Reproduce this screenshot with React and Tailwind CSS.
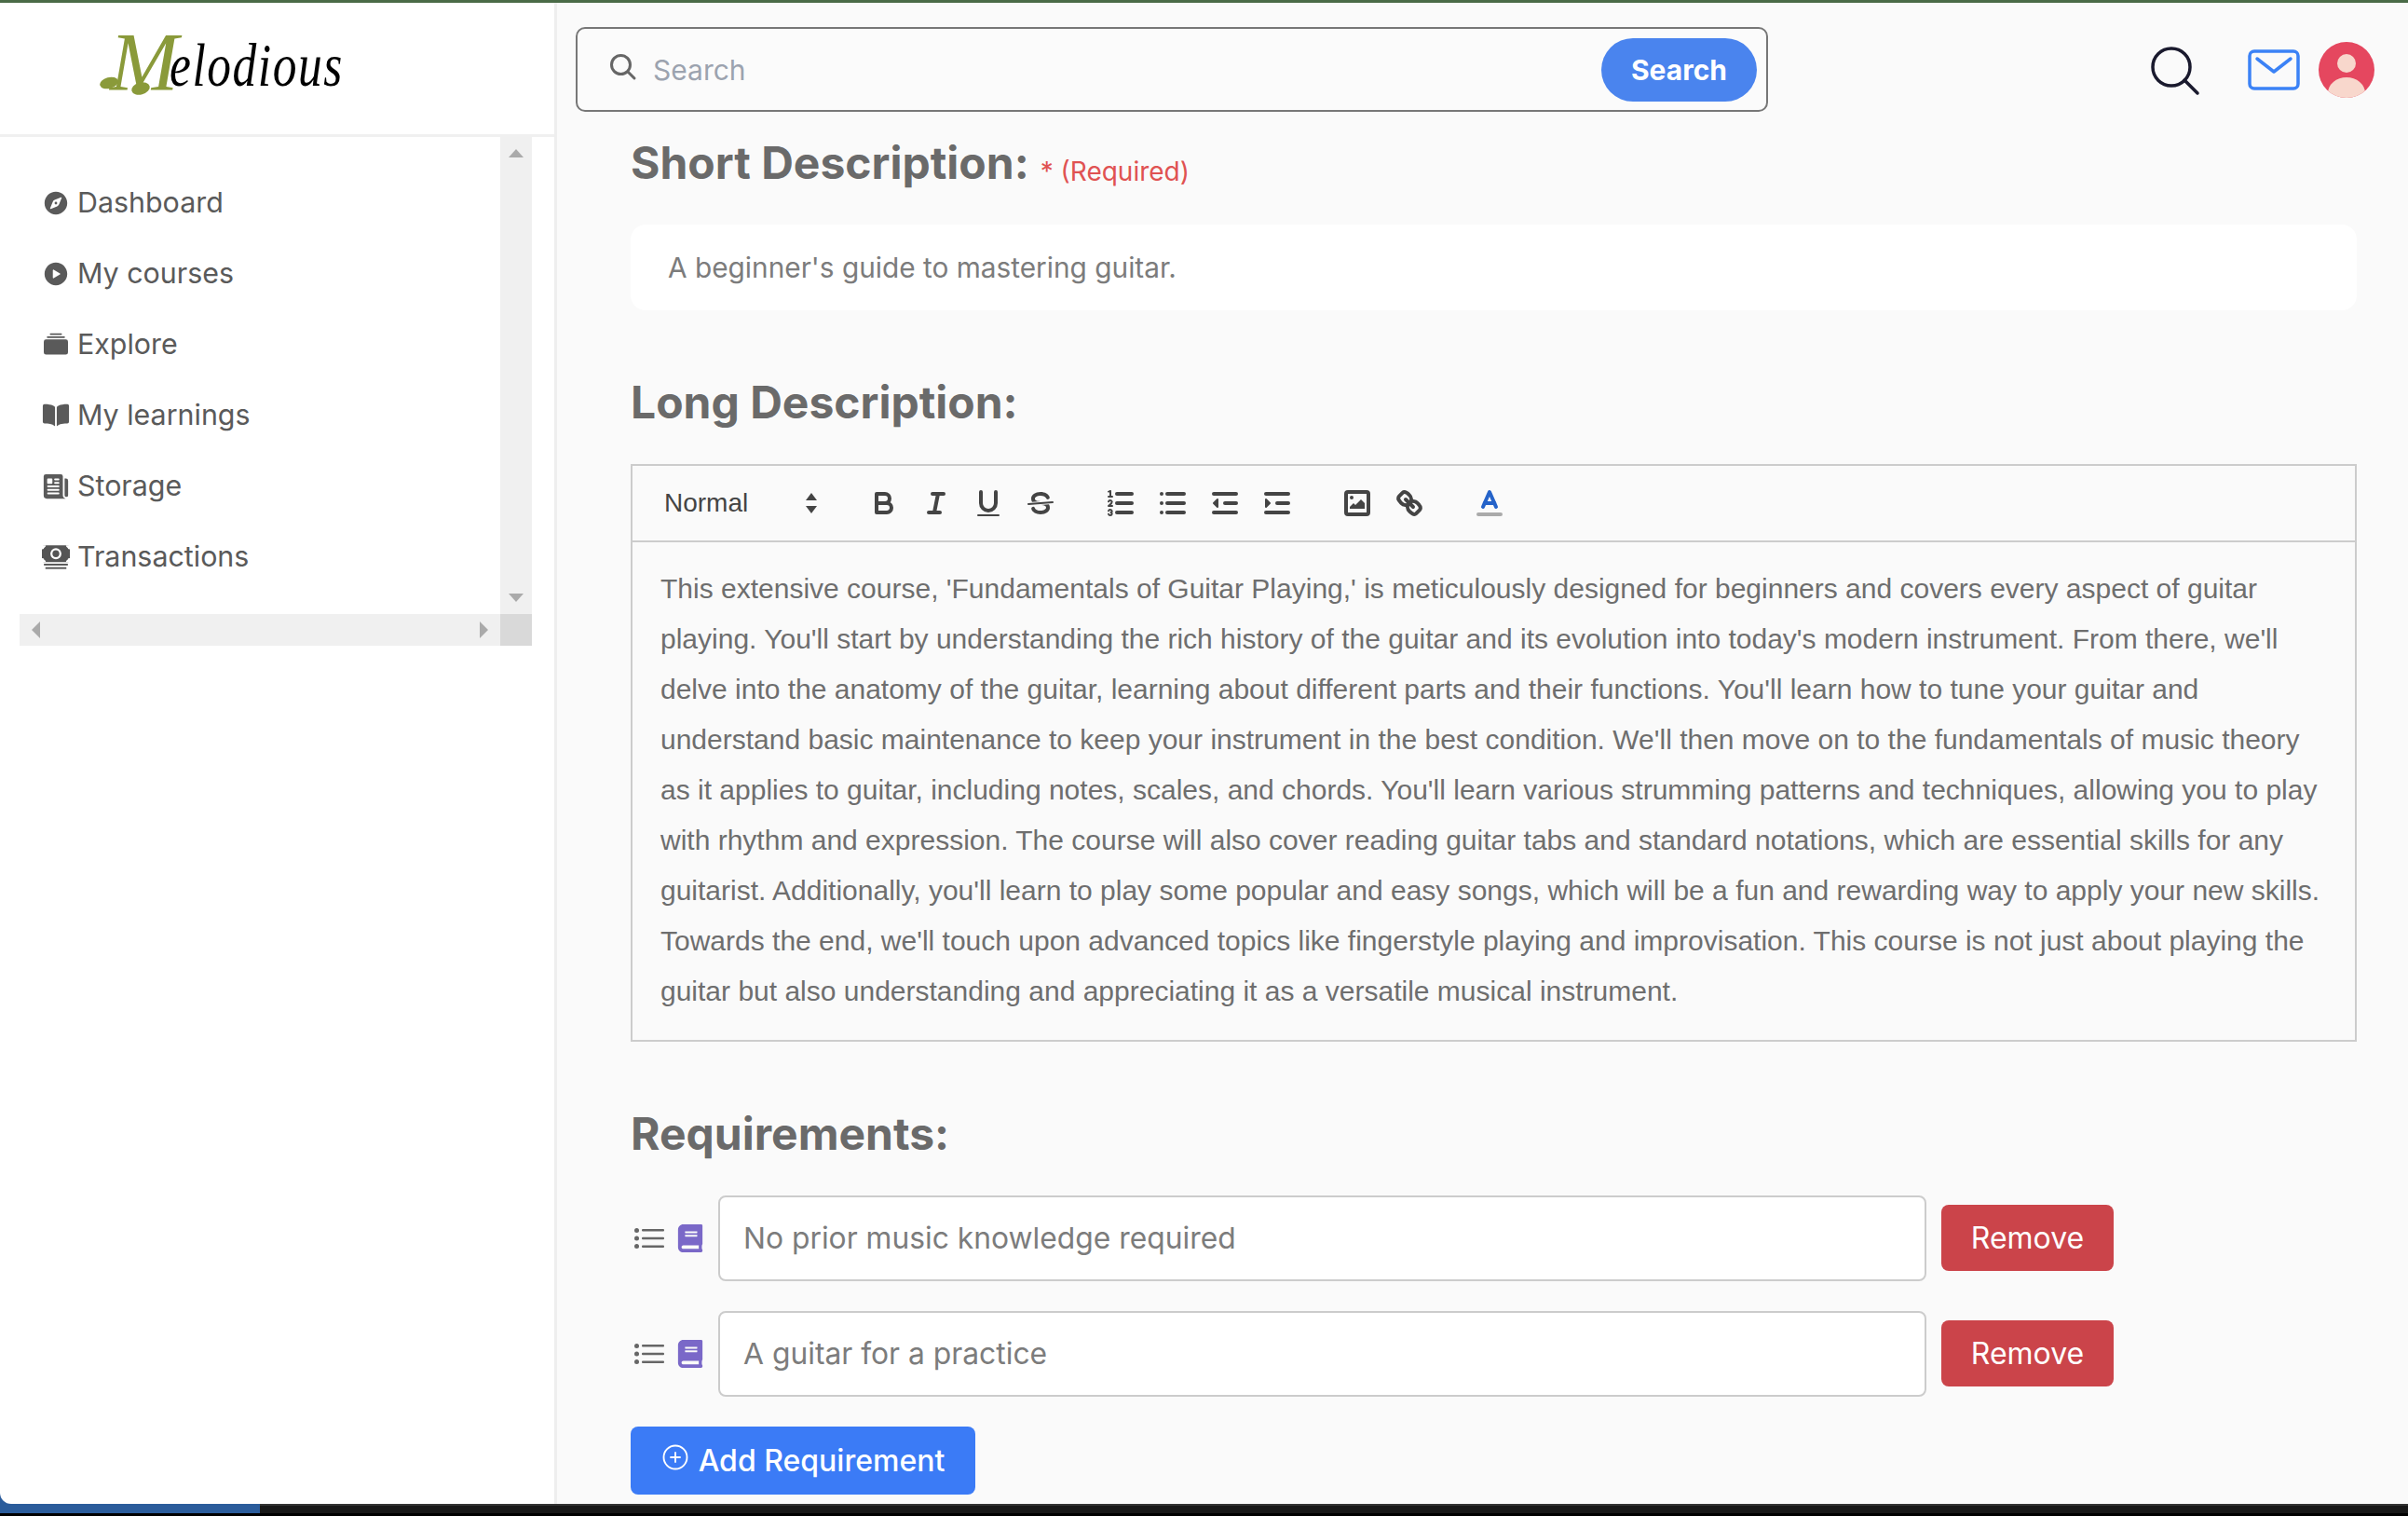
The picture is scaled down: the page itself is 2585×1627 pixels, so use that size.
import React from "react";
import { IoCompass, IoPlayCircle, IoBook, IoNewspaper } from "react-icons/io5";
import { BsCollectionFill } from "react-icons/bs";
import { FaBook } from "react-icons/fa";
import { CirclePlus } from "lucide-react";

const CashIcon = ({ size }) => (
  <svg width={size} height={size} viewBox="0 0 28 28" fill="#555" className="shrink-0">
    <rect x="0" y="2" width="28" height="17" rx="3" />
    <circle cx="14" cy="10.5" r="5.5" fill="#fff" />
    <circle cx="14" cy="10.5" r="3.4" />
    <path d="M0 6 Q3 6 4 2 L0 2 Z M28 6 Q25 6 24 2 L28 2 Z M0 15 Q3 15 4 19 L0 19 Z M28 15 Q25 15 24 19 L28 19 Z" fill="#fff" />
    <path d="M2.5 4.5 L5 7 M25.5 4.5 L23 7 M2.5 16.5 L5 14 M25.5 16.5 L23 14" stroke="#555" strokeWidth="2" />
    <rect x="2" y="20.5" width="24" height="1.8" />
    <rect x="3.5" y="24" width="21" height="1.8" />
  </svg>
);

const nav = [
  ["Dashboard", IoCompass, 30],
  ["My courses", IoPlayCircle, 30],
  ["Explore", BsCollectionFill, 26],
  ["My learnings", IoBook, 30],
  ["Storage", IoNewspaper, 30],
  ["Transactions", CashIcon, 30],
];

const lines = [
  "This extensive course, 'Fundamentals of Guitar Playing,' is meticulously designed for beginners and covers every aspect of guitar",
  "playing. You'll start by understanding the rich history of the guitar and its evolution into today's modern instrument. From there, we'll",
  "delve into the anatomy of the guitar, learning about different parts and their functions. You'll learn how to tune your guitar and",
  "understand basic maintenance to keep your instrument in the best condition. We'll then move on to the fundamentals of music theory",
  "as it applies to guitar, including notes, scales, and chords. You'll learn various strumming patterns and techniques, allowing you to play",
  "with rhythm and expression. The course will also cover reading guitar tabs and standard notations, which are essential skills for any",
  "guitarist. Additionally, you'll learn to play some popular and easy songs, which will be a fun and rewarding way to apply your new skills.",
  "Towards the end, we'll touch upon advanced topics like fingerstyle playing and improvisation. This course is not just about playing the",
  "guitar but also understanding and appreciating it as a versatile musical instrument.",
];

const Q = ({ children }) => (
  <svg viewBox="0 0 18 18" className="w-[36px] h-[36px] shrink-0" fill="none" stroke="#444" strokeWidth="2" strokeLinecap="round" strokeLinejoin="round">
    {children}
  </svg>
);

const Bold = () => (
  <Q>
    <path d="M5,4H9.5A2.5,2.5,0,0,1,12,6.5v0A2.5,2.5,0,0,1,9.5,9H5A0,0,0,0,1,5,9V4A0,0,0,0,1,5,4Z" />
    <path d="M5,9h5.5A2.5,2.5,0,0,1,13,11.5v0A2.5,2.5,0,0,1,10.5,14H5a0,0,0,0,1,0,0V9A0,0,0,0,1,5,9Z" />
  </Q>
);
const Italic = () => (
  <Q>
    <line x1="7" x2="13" y1="4" y2="4" />
    <line x1="5" x2="11" y1="14" y2="14" />
    <line x1="8" x2="10" y1="14" y2="4" />
  </Q>
);
const Underline = () => (
  <Q>
    <path d="M5,3V9a4.012,4.012,0,0,0,4,4H9a4.012,4.012,0,0,0,4-4V3" />
    <rect x="3" y="15" height="1" rx="0.5" width="12" fill="#444" stroke="none" />
  </Q>
);
const Strike = () => (
  <Q>
    <line x1="15.5" x2="2.5" y1="8.5" y2="9.5" strokeWidth="1" />
    <path fill="#444" stroke="none" d="M9.007,8C6.542,7.791,6,7.519,6,6.5,6,5.792,7.283,5,9,5c1.571,0,2.765.679,2.969,1.309a1,1,0,0,0,1.9-.617C13.356,4.106,11.354,3,9,3,6.2,3,4,4.538,4,6.5a3.2,3.2,0,0,0,.5,1.843Z" />
    <path fill="#444" stroke="none" d="M8.984,10C11.457,10.208,12,10.479,12,11.5c0,.708-1.283,1.5-3,1.5-1.571,0-2.765-.679-2.969-1.309a1,1,0,1,0-1.9.617C4.644,13.894,6.646,15,9,15c2.8,0,5-1.538,5-3.5a3.2,3.2,0,0,0-.5-1.843Z" />
  </Q>
);
const Ordered = () => (
  <Q>
    <line x1="7" x2="15" y1="4" y2="4" />
    <line x1="7" x2="15" y1="9" y2="9" />
    <line x1="7" x2="15" y1="14" y2="14" />
    <line x1="2.5" x2="4.5" y1="5.5" y2="5.5" strokeWidth="1" />
    <path fill="#444" stroke="none" d="M3.5,6A0.5,0.5,0,0,1,3,5.5V3.085l-0.276.138A0.5,0.5,0,0,1,2.053,3c-0.124-.247-0.023-0.324.224-0.447l1-.5A0.5,0.5,0,0,1,4,2.5v3A0.5,0.5,0,0,1,3.5,6Z" />
    <path strokeWidth="1" d="M4.5,10.5h-2c0-.234,1.85-1.076,1.85-2.234A0.959,0.959,0,0,0,2.5,8.156" />
    <path strokeWidth="1" d="M2.5,14.846a0.959,0.959,0,0,0,1.85-.109A0.7,0.7,0,0,0,3.75,14a0.688,0.688,0,0,0,.6-0.736,0.959,0.959,0,0,0-1.85-.109" />
  </Q>
);
const Bullet = () => (
  <Q>
    <line x1="6" x2="15" y1="4" y2="4" />
    <line x1="6" x2="15" y1="9" y2="9" />
    <line x1="6" x2="15" y1="14" y2="14" />
    <line x1="3" x2="3" y1="4" y2="4" />
    <line x1="3" x2="3" y1="9" y2="9" />
    <line x1="3" x2="3" y1="14" y2="14" />
  </Q>
);
const Outdent = () => (
  <Q>
    <line x1="3" x2="15" y1="14" y2="14" />
    <line x1="3" x2="15" y1="4" y2="4" />
    <line x1="9" x2="15" y1="9" y2="9" />
    <polyline fill="#444" strokeWidth="1" points="5 7 5 11 3 9 5 7" />
  </Q>
);
const Indent = () => (
  <Q>
    <line x1="3" x2="15" y1="14" y2="14" />
    <line x1="3" x2="15" y1="4" y2="4" />
    <line x1="9" x2="15" y1="9" y2="9" />
    <polyline fill="#444" strokeWidth="1" points="3 7 3 11 5 9 3 7" />
  </Q>
);
const ImageIcon = () => (
  <Q>
    <rect x="3" y="3" width="12" height="12" rx="1" ry="1" />
    <circle cx="6" cy="6" r="1" fill="#444" stroke="none" />
    <polyline fill="#444" stroke="none" points="5 12 5 11 7 9 8 10 11 7 13 9 13 12 5 12" />
  </Q>
);
const LinkIcon = () => (
  <Q>
    <line x1="7" x2="11" y1="7" y2="11" />
    <path d="M8.9,4.577a3.476,3.476,0,0,1,.36,4.679A3.476,3.476,0,0,1,4.577,8.9C3.185,7.5,2.458,6.331,3.458,5.331L5.331,3.458C6.331,2.458,7.5,3.185,8.9,4.577Z" />
    <path d="M13.423,9.1a3.476,3.476,0,0,0-4.679-.36,3.476,3.476,0,0,0,.36,4.679c1.392,1.392,2.5,2.119,3.5,1.119l1.872-1.872C15.477,11.616,14.814,10.491,13.423,9.1Z" />
  </Q>
);
const ColorIcon = () => (
  <Q>
    <line x1="3" x2="15" y1="15" y2="15" stroke="#aaa" />
    <polyline stroke="#2563c9" points="5.5 11 9 3 12.5 11" />
    <line stroke="#2563c9" x1="11.63" x2="6.38" y1="9" y2="9" />
  </Q>
);

const Tri = ({ className }) => <div className={className} />;

function Logo() {
  return (
    <div className="relative w-[270px] h-[70px] ml-[106px] mt-[-4px]">
      <span className="absolute left-[12px] top-[-14px] text-[88px] leading-none italic text-[#8a9a3a] font-['Liberation_Serif',serif]">M</span>
      <span className="absolute left-[76px] top-[0px] text-[66px] leading-none italic text-black font-['Liberation_Serif',serif] tracking-[2px] origin-left scale-x-[0.78]">elodious</span>
      <svg className="absolute left-0 top-0" width="70" height="70" viewBox="0 0 70 70" fill="#8a9a3a">
        <ellipse cx="11" cy="52" rx="10" ry="6" transform="rotate(-15 11 52)" />
        <ellipse cx="45" cy="58" rx="10" ry="6.5" transform="rotate(-15 45 58)" />
      </svg>
    </div>
  );
}

function ListIcon() {
  return (
    <svg width="32" height="22" viewBox="0 0 32 22" className="shrink-0" fill="#666" stroke="none">
      <circle cx="2.5" cy="2.5" r="2.5" />
      <circle cx="2.5" cy="11" r="2.5" />
      <circle cx="2.5" cy="19.5" r="2.5" />
      <rect x="8" y="1" width="24" height="2.6" rx="1" />
      <rect x="8" y="9.7" width="24" height="2.6" rx="1" />
      <rect x="8" y="18.4" width="24" height="2.6" rx="1" />
    </svg>
  );
}

function Requirement({ text }) {
  return (
    <div className="flex items-center h-[92px] relative">
      <div className="ml-[4px] flex items-center gap-[13px] w-[90px]">
        <ListIcon />
        <FaBook className="text-[#7a68c8] shrink-0" size={30} />
      </div>
      <div className="w-[1297px] h-[92px] rounded-[8px] border-2 border-[#cccccc] bg-white flex items-center pl-[25px] text-[31.8px] text-[#7c7c7c]">{text}</div>
      <button className="ml-[16px] mb-[2px] pt-[2px] w-[185px] h-[71px] rounded-[8px] bg-[#cb444a] text-white text-[32px]">Remove</button>
    </div>
  );
}

export default function App() {
  return (
    <div className="w-[2585px] h-[1627px] overflow-hidden flex flex-col bg-[#fafafa] font-['Inter',sans-serif]">
      <div className="h-[3px] bg-[#4a6b47] shrink-0" />
      <div className="flex-1 flex min-h-0 bg-[#2b5c9b]">
        <aside className="w-[598px] shrink-0 bg-white border-r-[3px] border-[#eeeeee] flex flex-col rounded-bl-[12px]">
          <div className="h-[144px] shrink-0 border-b-[3px] border-[#f0f0f0] flex items-center">
            <Logo />
          </div>
          <div className="ml-[21px] w-[550px] grid grid-cols-[516px_34px] grid-rows-[512px_34px]">
            <div className="pt-[33px] pl-[24px]">
              {nav.map(([label, Icon, size]) => (
                <div key={label} className="h-[76px] flex items-center text-[30.4px] text-[#5a5a5a]">
                  <span className="w-[38px] shrink-0 flex justify-center pr-[8px]"><Icon size={size} className="shrink-0" /></span>
                  <span>{label}</span>
                </div>
              ))}
            </div>
            <div className="bg-[#f0f0f0] flex flex-col items-center justify-between py-[13px]">
              <Tri className="w-0 h-0 border-x-[8px] border-x-transparent border-b-[9px] border-b-[#aaaaaa]" />
              <Tri className="w-0 h-0 border-x-[8px] border-x-transparent border-t-[9px] border-t-[#aaaaaa]" />
            </div>
            <div className="bg-[#f0f0f0] flex items-center justify-between px-[13px]">
              <Tri className="w-0 h-0 border-y-[9px] border-y-transparent border-r-[9px] border-r-[#aaaaaa]" />
              <Tri className="w-0 h-0 border-y-[9px] border-y-transparent border-l-[9px] border-l-[#aaaaaa]" />
            </div>
            <div className="bg-[#d9d9d9]" />
          </div>
        </aside>
        <main className="flex-1 min-w-0 flex flex-col bg-[#fafafa]">
          <header className="h-[144px] shrink-0 flex items-start relative">
            <div className="ml-[20px] mt-[26px] w-[1280px] h-[91px] rounded-[10px] border-2 border-[#777777] flex items-center pl-[34px] pr-[10px] bg-[#fbfbfb]">
              <svg width="30" height="30" viewBox="0 0 30 30" fill="none" stroke="#666" strokeWidth="3" strokeLinecap="round" className="shrink-0 mb-[6px]">
                <circle cx="12.5" cy="12.5" r="10" />
                <line x1="20" y1="20" x2="27" y2="27" />
              </svg>
              <span className="ml-[17px] pt-[1px] text-[30px] text-[#9ca3af] flex-1">Search</span>
              <button className="w-[167px] h-[68px] pt-[1px] rounded-full bg-[#4a84ee] text-white text-[30px] font-bold">Search</button>
            </div>
            <svg width="56" height="56" viewBox="0 0 56 56" fill="none" stroke="#1a1a2e" strokeWidth="3.5" strokeLinecap="round" className="ml-[410px] mt-[46px] shrink-0">
              <circle cx="23" cy="23" r="20" />
              <line x1="37" y1="37" x2="51" y2="51" />
            </svg>
            <svg width="56" height="44" viewBox="0 0 56 44" fill="none" stroke="#3b82f6" strokeWidth="3.5" strokeLinecap="round" strokeLinejoin="round" className="ml-[49px] mt-[50px] shrink-0">
              <rect x="2" y="2" width="52" height="40" rx="5" />
              <polyline points="10,10 28,24 46,10" />
            </svg>
            <svg width="60" height="60" viewBox="0 0 60 60" className="ml-[20px] mt-[42px] shrink-0">
              <defs>
                <clipPath id="av"><circle cx="30" cy="30" r="30" /></clipPath>
              </defs>
              <circle cx="30" cy="30" r="30" fill="#e5475f" />
              <circle cx="30" cy="23" r="10" fill="#f8d7cc" />
              <ellipse cx="30" cy="55" rx="20" ry="17" fill="#f8d7cc" clipPath="url(#av)" />
            </svg>
          </header>
          <div className="pl-[79px] pr-[55px] flex flex-col flex-1 min-h-0">
            <div className="h-[64px] mt-[-4px] flex items-center">
              <h2 className="text-[48px] font-bold text-[#6a6a6a] leading-none">Short Description:</h2>
              <span className="ml-[12px] mt-[18px] text-[28px] text-[#e05252]">* (Required)</span>
            </div>
            <div className="mt-[34px] h-[92px] rounded-[16px] bg-white flex items-center pl-[40px] text-[29.8px] text-[#7c7c7c]">A beginner's guide to mastering guitar.</div>
            <h2 className="mt-[67px] h-[64px] flex items-center text-[48px] font-bold text-[#6a6a6a] leading-none">Long Description:</h2>
            <div className="mt-[34px] border-2 border-[#cccccc] h-[620px] flex flex-col">
              <div className="h-[82px] shrink-0 border-b-2 border-[#cccccc] flex items-center pl-[34px] text-[#444444] font-['Liberation_Sans',sans-serif]">
                <span className="text-[28px] w-[149px]">Normal</span>
                <svg width="18" height="26" viewBox="0 0 18 26" fill="#444" className="shrink-0"><polygon points="9,2 15,10 3,10" /><polygon points="9,24 15,16 3,16" /></svg>
                <div className="ml-[51px] flex gap-[20px]"><Bold /><Italic /><Underline /><Strike /></div>
                <div className="ml-[50px] flex gap-[20px]"><Ordered /><Bullet /><Outdent /><Indent /></div>
                <div className="ml-[50px] flex gap-[20px]"><ImageIcon /><LinkIcon /></div>
                <div className="ml-[50px]"><ColorIcon /></div>
              </div>
              <div className="pl-[30px] pt-[23px] text-[30px] leading-[54px] text-[#6e6e6e] font-['Liberation_Sans',sans-serif]">
                {lines.map((l) => (
                  <div key={l} className="whitespace-nowrap">{l}</div>
                ))}
              </div>
            </div>
            <h2 className="mt-[67px] h-[64px] flex items-center text-[48px] font-bold text-[#6a6a6a] leading-none">Requirements:</h2>
            <div className="mt-[34px] flex flex-col gap-[32px]">
              <Requirement text="No prior music knowledge required" />
              <Requirement text="A guitar for a practice" />
            </div>
            <button className="mt-[32px] w-[370px] h-[73px] rounded-[8px] bg-[#3b7bf6] text-white text-[32px] font-medium flex items-center justify-center gap-[10px] shrink-0">
              <CirclePlus size={30} strokeWidth={1.5} className="mb-[8px]" />
              <span>Add Requirement</span>
            </button>
          </div>
        </main>
      </div>
      <div className="h-[13px] shrink-0 flex bg-[#181818] border-b-[3px] border-b-black">
        <div className="w-[279px] bg-[#2b5c9b]" />
        <div className="flex-1 border-t-2 border-[#333333]" />
      </div>
    </div>
  );
}
